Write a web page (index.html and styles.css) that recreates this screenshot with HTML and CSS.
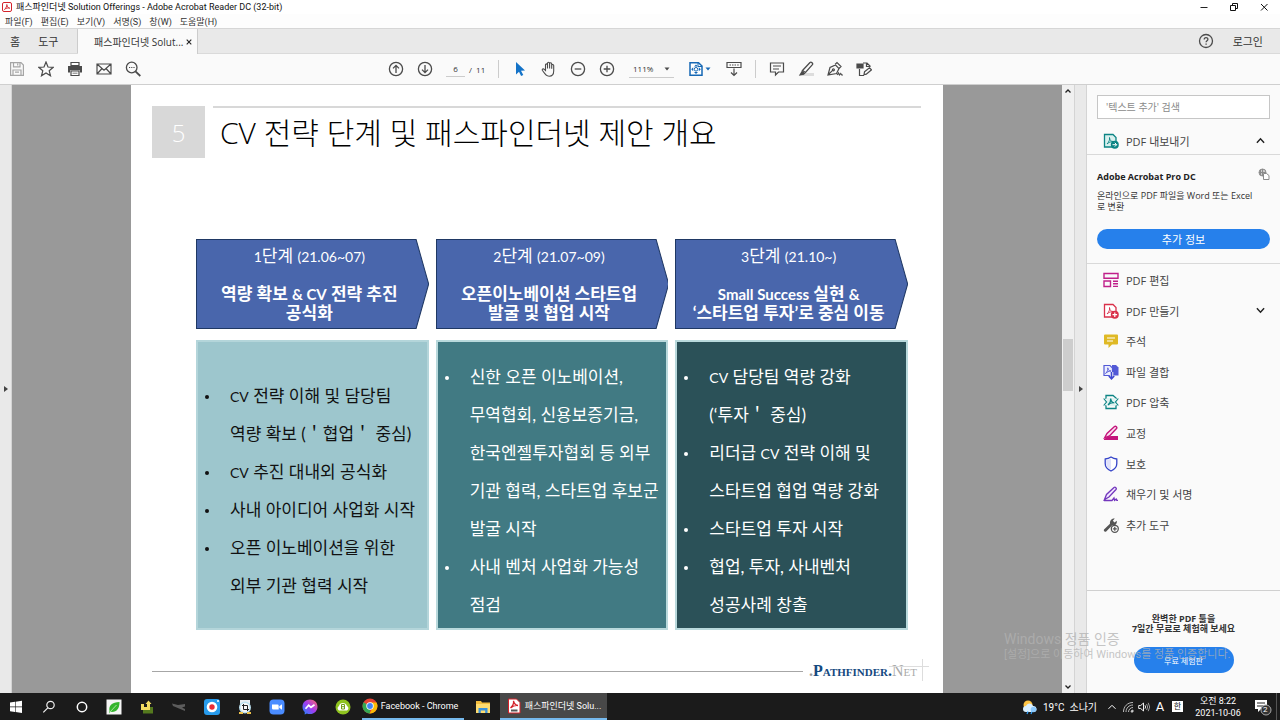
FILE: index.html
```html
<!DOCTYPE html>
<html lang="ko">
<head>
<meta charset="utf-8">
<meta name="viewport" content="width=device-width, initial-scale=1">
<title>패스파인더넷 Solution Offerings - Adobe Acrobat Reader DC (32-bit)</title>
<link rel="stylesheet" href="styles.css">
</head>
<body>
<div class="app">
  <header class="titlebar">
    <svg class="app-icon" viewBox="0 0 10 10"><rect x=".5" y=".5" width="9" height="9" rx="1.5" fill="#fff" stroke="#d3222a"/><path d="M2.5 7.5C4 6 5 4 4.800 2.500M4.800 2.500C5 5 6.500 6 7.800 6.200M2.500 7.500C4 6 6 5.600 7.800 6.200" fill="none" stroke="#d3222a" stroke-width=".9"/></svg>
    <h1 class="title">패스파인더넷 Solution Offerings - Adobe Acrobat Reader DC (32-bit)</h1>
    <div class="window-controls">
      <button aria-label="최소화"><svg viewBox="0 0 10 10"><path d="M1.500 5.500h7" stroke="#222"/></svg></button>
      <button aria-label="이전 크기로"><svg viewBox="0 0 10 10" fill="none" stroke="#111"><path d="M3.500 3.500v-2h5v5h-2M1.500 3.500h5v5h-5z"/></svg></button>
      <button aria-label="닫기"><svg viewBox="0 0 10 10"><path d="M2 2l6.500 6.500M8.500 2L2 8.500" stroke="#111"/></svg></button>
    </div>
  </header>
  <nav class="menubar">
    <button>파일(F)</button><button>편집(E)</button><button>보기(V)</button><button>서명(S)</button><button>창(W)</button><button>도움말(H)</button>
  </nav>
  <nav class="tabs">
    <div class="tabs-home"><button>홈</button><button>도구</button></div>
    <div class="tab-active"><button class="tab-name">패스파인더넷 Solut...</button><button class="tab-close" aria-label="탭 닫기"><svg viewBox="0 0 6 6"><path d="M.7.7l4.600 4.600M5.300.7L.7 5.300" stroke="#222" stroke-width="1.100"/></svg></button></div>
    <div class="tabs-right">
      <button class="help" aria-label="도움말"><svg viewBox="0 0 16 16" fill="none" stroke="#4b4b4b" stroke-width="1.300"><circle cx="8" cy="8" r="6.500"/><path d="M6.200 6.600c0-2.600 3.700-2.400 3.700-.3 0 1.400-1.800 1.500-1.800 3M8.100 10.500v1.300"/></svg></button>
      <button class="login">로그인</button>
    </div>
  </nav>

  <div class="toolbar">
    <div class="tools tools-file">
      <button aria-label="저장"><svg viewBox="0 0 16 16" fill="none" stroke="#a5a5a5" stroke-width="1.200"><path d="M1.600 1.600h10.400l2.400 2.400v10.400H1.600zM4.500 1.600v4.200h6.500V1.600M8.700 2.500v2M4 14.400V9h8v5.400M6 11.200h4"/></svg></button>
      <button aria-label="별표"><svg viewBox="0 0 16 16" fill="none" stroke="#4b4b4b" stroke-width="1.200"><path d="M8 1l2 5 5.200.3-4 3.400 1.300 5.100L8 12l-4.500 2.800 1.300-5.100-4-3.400L6 6z"/></svg></button>
      <button aria-label="인쇄"><svg viewBox="0 0 16 16"><path d="M4 1.500h8v3H4zM4 10h8v4.500H4z" fill="#fff" stroke="#4b4b4b" stroke-width="1.200"/><path d="M1 5h14v6.500h-2V9.300H3v2.200H1z" fill="#4b4b4b"/><path d="M5.500 12.200h5" stroke="#777"/></svg></button>
      <button aria-label="전자 메일"><svg viewBox="0 0 16 16" fill="none" stroke="#4b4b4b" stroke-width="1.200"><path d="M1 3h14v10H1zM1 3l7 6.200L15 3M1 13l5-5.500M15 13l-5-5.500"/></svg></button>
      <button aria-label="찾기"><svg viewBox="0 0 16 16" fill="none" stroke="#4b4b4b" stroke-width="1.300"><circle cx="6.700" cy="6.500" r="5.300"/><path d="M10.500 10.400l4.800 4.600" stroke-width="1.800"/><path d="M4 6.500h1.200M6.200 6.500h1.200M8.400 6.500h1.200" stroke-width="1.200"/></svg></button>
    </div>
    <div class="tools tools-page">
      <button aria-label="이전 페이지"><svg viewBox="0 0 16 16" fill="none" stroke="#4b4b4b" stroke-width="1.300"><circle cx="8" cy="8" r="6.600"/><path d="M8 12V4.500M5 7.400l3-3 3 3"/></svg></button>
      <button aria-label="다음 페이지"><svg viewBox="0 0 16 16" fill="none" stroke="#4b4b4b" stroke-width="1.300"><circle cx="8" cy="8" r="6.600"/><path d="M8 4v7.500M5 8.600l3 3 3-3"/></svg></button>
      <label class="page-box"><input type="text" value="6" aria-label="페이지"><span>/&nbsp; 11</span></label>
    </div>
    <div class="tools tools-view">
      <button aria-label="선택"><svg viewBox="0 0 16 16"><path d="M4 1l9 8.500-4 .3 2.300 4.200-2.200 1-2.100-4.300L4 13.500z" fill="#1473c8"/></svg></button>
      <button aria-label="손"><svg viewBox="0 0 16 16" fill="none" stroke="#4b4b4b" stroke-width="1.100"><path d="M4.500 9.500V4c0-1.500 2-1.500 2 0v3.500V2.500c0-1.600 2.100-1.600 2.100 0v5V2.800c0-1.500 2.100-1.500 2.100 0v5V4.500c0-1.400 2-1.400 2 0v5.500c0 3.500-1.700 5.200-4.500 5.200-3 0-3.700-1.500-6.700-5.700-.9-1.400.8-2.200 1.800-1.200z"/></svg></button>
      <button aria-label="축소"><svg viewBox="0 0 16 16" fill="none" stroke="#4b4b4b" stroke-width="1.300"><circle cx="8" cy="8" r="6.600"/><path d="M4.700 8h6.600"/></svg></button>
      <button aria-label="확대"><svg viewBox="0 0 16 16" fill="none" stroke="#4b4b4b" stroke-width="1.300"><circle cx="8" cy="8" r="6.600"/><path d="M4.700 8h6.600M8 4.700v6.600"/></svg></button>
    </div>
    <div class="zoom"><select aria-label="확대/축소 비율"><option>111%</option></select><svg viewBox="0 0 6 4"><path d="M.5.5h5L3 3.500z" fill="#4b4b4b"/></svg></div>
    <div class="tools tools-fit">
      <button class="fit" aria-label="페이지 맞춤"><svg viewBox="0 0 16 16"><path d="M2 1.700h8.500L14 5v9.300H2z" fill="#fff" stroke="#1668b5" stroke-width="1.500"/><path d="M10 1.700V5.500h4" fill="none" stroke="#1668b5"/><path d="M8 3.500l2 2H6zM8 13l2-2H6zM3.200 8.300l2-2v4zM12.800 8.300l-2-2v4z" fill="#1668b5"/><circle cx="8" cy="8.300" r="1.800" fill="none" stroke="#1668b5"/></svg><svg class="caret" viewBox="0 0 6 4"><path d="M.5.5h5L3 3.500z" fill="#1668b5"/></svg></button>
      <button aria-label="스크롤"><svg viewBox="0 0 16 16" fill="none" stroke="#4b4b4b" stroke-width="1.200"><path d="M1 6.500v-5h14v5zM3.500 4h1.500M6 4h1.500M8.500 4H10M11.200 4h1.500M8 7.500V14M5 11.500l3 3 3-3"/></svg></button>
    </div>
    <div class="tools tools-note">
      <button aria-label="메모"><svg viewBox="0 0 16 16" fill="none" stroke="#4b4b4b" stroke-width="1.200"><path d="M1.500 2h13v9H9.500L6.500 14v-3h-5zM4 5h8M4 8h6"/></svg></button>
      <button aria-label="강조"><svg viewBox="0 0 16 16"><path d="M7 12h9v3H4z" fill="#ddd"/><path d="M4.500 9.500l7.500-8c1.200-1 3.400 1 2.400 2.200L7.500 11.500z" fill="#fafafa" stroke="#4b4b4b" stroke-width="1.300"/><path d="M.8 14.800l3.200-5.300 3.500 3-2 1.600z" fill="#4b4b4b"/></svg></button>
      <button aria-label="서명"><svg viewBox="0 0 16 16" fill="none" stroke="#4b4b4b" stroke-width="1.200"><path d="M1 14L3 6.500 8.500 4l3.500 3.500-2.500 5zM1 14l4.800-4.800M8 3.500L10 1.500l4 4-2 2"/><circle cx="6.400" cy="8.800" r="1"/><path d="M10 14l1.500-2 1 2 1.200-1.500 1 1.500H16"/></svg></button>
      <button aria-label="양식 편집"><svg viewBox="0 0 16 16" fill="none" stroke="#4b4b4b" stroke-width="1.200"><path d="M3.500 8v6.500H8M7 2h4l3 3v1M10.500 2v3.500h3.500"/><path d="M1 3h6v4H1z" fill="#4b4b4b"/><path d="M8.500 10.800l5-4 2 2-5.200 4.400-2.300.6z"/></svg></button>
    </div>
  </div>

  <div class="workspace">
    <button class="rail" aria-label="탐색 창 열기"><svg viewBox="0 0 4 6"><path d="M0 0l4 3-4 3z" fill="#444"/></svg></button>
    <main class="viewport">
      <article class="page">
        <div class="slide-head">
          <div class="slide-no">5</div>
          <h2 class="slide-title">CV 전략 단계 및 패스파인더넷 제안 개요</h2>
        </div>
        <div class="stages">
          <section class="stage">
            <header class="arrow"><svg viewBox="0 0 232 90" preserveAspectRatio="none"><path d="M.5.5h219L232 45l-12.500 44.500H.5z"/></svg>
              <p><span class="en">1</span>단계 <span class="en">(21.06~07)</span></p><h3>역량 확보 <span class="en">&amp; CV</span> 전략 추진<br>공식화</h3></header>
            <ul class="card card-light">
              <li><div><span class="en">CV</span> 전략 이해 및 담당팀<br>역량 확보 (＇협업＇ 중심)</div></li>
              <li><div><span class="en">CV</span> 추진 대내외 공식화</div></li>
              <li><div>사내 아이디어 사업화 시작</div></li>
              <li><div>오픈 이노베이션을 위한<br>외부 기관 협력 시작</div></li>
            </ul>
          </section>
          <section class="stage">
            <header class="arrow"><svg viewBox="0 0 232 90" preserveAspectRatio="none"><path d="M.5.5h219L232 45l-12.500 44.500H.5z"/></svg>
              <p><span class="en">2</span>단계 <span class="en">(21.07~09)</span></p><h3>오픈이노베이션 스타트업<br>발굴 및 협업 시작</h3></header>
            <ul class="card card-teal">
              <li><div>신한 오픈 이노베이션,<br>무역협회, 신용보증기금,<br>한국엔젤투자협회 등 외부<br>기관 협력, 스타트업 후보군<br>발굴 시작</div></li>
              <li><div>사내 벤처 사업화 가능성<br>점검</div></li>
            </ul>
          </section>
          <section class="stage">
            <header class="arrow"><svg viewBox="0 0 232 90" preserveAspectRatio="none"><path d="M.5.5h219L232 45l-12.500 44.500H.5z"/></svg>
              <p><span class="en">3</span>단계 <span class="en">(21.10~)</span></p><h3><span class="en">Small Success</span> 실현 <span class="en">&amp;</span><br>‘스타트업 투자’로 중심 이동</h3></header>
            <ul class="card card-dark">
              <li><div><span class="en">CV</span> 담당팀 역량 강화<br>(‘투자＇ 중심)</div></li>
              <li><div>리더급 <span class="en">CV</span> 전략 이해 및<br>스타트업 협업 역량 강화</div></li>
              <li><div>스타트업 투자 시작</div></li>
              <li><div>협업, 투자, 사내벤처<br>성공사례 창출</div></li>
            </ul>
          </section>
        </div>
        <footer class="slide-foot">
          <span class="foot-line"></span>
          <span class="brand"><span class="brand-dot">.</span>Pathfinder.<span class="brand-net">Net</span></span>
        </footer>
      </article>
    </main>
    <div class="scrollbar">
      <svg viewBox="0 0 8 6"><path d="M1.500 4.500L4 2l2.500 2.500" fill="none" stroke="#222" stroke-width="1.300"/></svg>
      <div class="track"><div class="thumb"></div></div>
      <svg viewBox="0 0 8 6"><path d="M1.500 1.500L4 4l2.500-2.500" fill="none" stroke="#222" stroke-width="1.300"/></svg>
    </div>
    <button class="rail rail-right" aria-label="도구 창 닫기"><svg viewBox="0 0 4 6"><path d="M0 0l4 3-4 3z" fill="#444"/></svg></button>
    <aside class="panel">
      <div class="panel-search"><input type="text" placeholder="'텍스트 추가' 검색" aria-label="도구 검색"></div>
      <button class="tool tool-open"><svg viewBox="0 0 16 16"><path d="M1.500 1.500h8.500l3 3v9.500H1.500z" fill="#d9f0ee" stroke="#0c8484" stroke-width="1.300"/><path d="M4 11c2-2 3-4.500 2.500-6.500C6.500 7 8 8.500 10 8.500 8 8.500 5.500 9.500 4 11" fill="none" stroke="#0c8484" stroke-width=".9"/><circle cx="11.800" cy="11.700" r="4" fill="#0c8484"/><path d="M9.500 11.700h4M11.800 9.800l1.900 1.900-1.900 1.900" stroke="#fff" fill="none"/></svg><span>PDF 내보내기</span><svg class="chev" viewBox="0 0 8 6"><path d="M.8 5L4 1.500 7.200 5" fill="none" stroke="#222" stroke-width="1.300"/></svg></button>
      <div class="promo">
        <div class="promo-head"><h3>Adobe Acrobat Pro DC</h3><svg viewBox="0 0 12 12" fill="none" stroke="#8b8b8b"><circle cx="4.500" cy="4.500" r="3.500" fill="#ccc"/><path d="M1 4.500h7M4.500 1v7M2.500 2v5"/><path d="M5.500 5.500h3l2.500 2v4H5.500z" fill="#fff"/></svg></div>
        <p>온라인으로 PDF 파일을 Word 또는 Excel<br>로 변환</p>
        <button class="pill">추가 정보</button>
      </div>
      <div class="tool-list">
        <button class="tool"><svg viewBox="0 0 16 16" fill="none" stroke="#c0208a" stroke-width="1.400"><path d="M1 1.500h14v4.800H1zM1 9h6.500v5.500H1zM10 9.200h5M10 11.800h5M10 14.400h5"/></svg><span>PDF 편집</span></button>
        <button class="tool"><svg viewBox="0 0 16 16"><path d="M1.500 1.500h8.500l3 3v9.500H1.500z" fill="#fff" stroke="#d9304a" stroke-width="1.300"/><path d="M4 11c2-2 3-4.500 2.500-6.500C6.500 7 8 8.500 10 8.500 8 8.500 5.500 9.500 4 11" fill="none" stroke="#d9304a" stroke-width=".9"/><circle cx="11.800" cy="11.700" r="4" fill="#d9304a"/><path d="M9.500 11.700h4.600M11.800 9.400V14" stroke="#fff" stroke-width="1.200"/></svg><span>PDF 만들기</span><svg class="chev" viewBox="0 0 8 6"><path d="M.8 1L4 4.500 7.200 1" fill="none" stroke="#222" stroke-width="1.300"/></svg></button>
        <button class="tool"><svg viewBox="0 0 16 16"><path d="M2 1.500h12q1 0 1 1v8q0 1-1 1H9L5.500 15v-3.500H2q-1 0-1-1v-8q0-1 1-1z" fill="#dfb925"/><path d="M4 5h8M4 8h6" stroke="#fff" stroke-width="1.200"/></svg><span>주석</span></button>
        <button class="tool"><svg viewBox="0 0 16 16"><path d="M9 1h4l2.500 2.500v8H9z" fill="#5259d6"/><path d="M1 1.500h6l2.500 2.500v7.500H1z" fill="#eceeff" stroke="#5259d6" stroke-width="1.200"/><path d="M2.500 9.500C4.500 7.500 5 6 4.800 3.800 5 6 6 7 8 7 6 7 4 8 2.500 9.500" fill="none" stroke="#5259d6" stroke-width=".9"/><path d="M8.500 8v5" stroke="#fafafa" stroke-width="3.500"/><path d="M8.500 8v6.500M5.800 12l2.700 2.800 2.700-2.800" fill="none" stroke="#3e47d0" stroke-width="1.600"/></svg><span>파일 결합</span></button>
        <button class="tool"><svg viewBox="0 0 16 16"><path d="M3 5V1.500h7L13 4v1M3 11v3.500h10V11" fill="none" stroke="#0c8484" stroke-width="1.300"/><path d="M3.500 4h9v8h-9z" fill="#e0f3f1"/><path d="M.7 4.500L3.500 8 .7 11.500M15.300 4.500L12.500 8l2.800 3.500M5 11c2-2 3-4 2.700-6.500C8 7 9 8.500 11.300 8.800 9 8.500 6.500 9.500 5 11" fill="none" stroke="#0c8484" stroke-width="1.200"/></svg><span>PDF 압축</span></button>
        <button class="tool"><svg viewBox="0 0 16 16"><path d="M1.500 13L4 8.500l7.500-7c1.200-1 3 .8 2 2L6.500 11z" fill="#fce2f2" stroke="#c4157c" stroke-width="1.400"/><path d="M1 14l4-2.600L8 11h7v4H1z" fill="#c4157c"/></svg><span>교정</span></button>
        <button class="tool"><svg viewBox="0 0 16 16"><path d="M8 1c2 1.400 3.600 1.900 5.800 2v4.500c0 3.500-2.500 6-5.800 7.500-3.300-1.500-5.800-4-5.800-7.500V3C4.400 2.900 6 2.400 8 1z" fill="#fff" stroke="#3544c8" stroke-width="1.300"/><path d="M8 2.500C6.500 3.500 5 3.900 3.200 4v3.500c0 3 2 4.900 4.800 6.200z" fill="#dfe1fa"/></svg><span>보호</span></button>
        <button class="tool"><svg viewBox="0 0 16 16" fill="none" stroke="#7337bd" stroke-width="1.300"><path d="M1.500 13.500L3.500 8.500l7.500-7c1.200-1 3 .8 2 2l-7 7.500zM1 14.500h8l2-2.500.6 2.300 1.600-1.300.6 1.300H15" fill="#f1e6ff"/></svg><span>채우기 및 서명</span></button>
        <button class="tool"><svg viewBox="0 0 16 16"><path d="M1 12.500L7 6.800C6.500 4 8.500 1 11.800 1.500L9.800 3.800l1.700 1.700 2.300-1.800c.4 2-.6 4-2.300 4.600L9 8.500 3.200 14.400C1.800 15.300.2 13.700 1 12.500z" fill="#555"/><circle cx="11.800" cy="11.800" r="3.500" fill="#fff" stroke="#555" stroke-width="1.300"/><path d="M9.800 11.800h4M11.800 9.800v4" stroke="#555" stroke-width="1.300"/></svg><span>추가 도구</span></button>
      </div>
      <div class="trial"><p>완벽한 PDF 툴을<br>7일간 무료로 체험해 보세요</p><button class="pill">무료 체험판</button></div>
    </aside>
    <div class="watermark"><strong>Windows 정품 인증</strong><span>[설정]으로 이동하여 Windows를 정품 인증합니다.</span></div>
  </div>

  <footer class="taskbar">
    <div class="pins">
      <button aria-label="시작"><svg viewBox="0 0 16 16" fill="#fff"><path d="M2 3.500l5-.7V7.600H2zM7.600 2.700L14 1.800v5.800H7.600zM2 8.200h5V13l-5-.7zM7.600 8.200H14V14l-6.400-.9z"/></svg></button>
      <button aria-label="검색"><svg viewBox="0 0 16 16" fill="none" stroke="#eee" stroke-width="1.200"><circle cx="9.500" cy="6" r="3.700"/><path d="M6.800 8.800L2.300 13.300"/></svg></button>
      <button aria-label="Cortana"><svg viewBox="0 0 16 16"><circle cx="8" cy="8" r="4.700" fill="none" stroke="#fff" stroke-width="1.500"/></svg></button>
      <button aria-label="나뭇잎"><svg viewBox="0 0 16 16"><path d="M.5.500h15v15H.5z" fill="#f5f5f5"/><path d="M3.500 12C2.500 6 6 3.500 13.500 3c0 7-3 10.500-9 9.800L3 14.500" fill="#35b52d"/><path d="M3.500 13.500L10.500 6" stroke="#a8e5a0"/></svg></button>
      <button aria-label="작업 도구"><svg viewBox="0 0 16 16"><path d="M7 8h7v6.500H4V10h3z" fill="#55791e"/><path d="M2 5h3v3h3V5H6.500L9.500 1.500 12.500 5H11v6H2z" fill="#f3dc62"/></svg></button>
      <button aria-label="기기"><svg viewBox="0 0 16 16"><path d="M1 4.500l6 1.500 7-1v2.500L11 8.500l3 1.500v2L8 9.500 2 7z" fill="#5c5c5c"/></svg></button>
      <button aria-label="녹화"><svg viewBox="0 0 16 16"><rect width="16" height="16" rx="3" fill="#279bec"/><circle cx="8" cy="8" r="5.300" fill="#fff"/><circle cx="8" cy="8" r="2.700" fill="#e92c36"/><circle cx="14" cy="2" r="1" fill="#fff"/></svg></button>
      <button aria-label="캡처"><svg viewBox="0 0 16 16"><path d="M3 1h10v4H3z" fill="#e9edf0"/><circle cx="8" cy="8.500" r="6" fill="#bce1ef"/><circle cx="8" cy="8.500" r="4.500" fill="#f8f8f8"/><path d="M5 6.500h5.500V12M6.500 5v5.500H12" fill="none" stroke="#222"/><path d="M2 13h4v2H2zM10 13h4v2h-4z" fill="#efc24b"/></svg></button>
      <button aria-label="Zoom"><svg viewBox="0 0 16 16"><rect x=".5" y=".5" width="15" height="15" rx="4" fill="#4a8cff"/><path d="M3 5.500h5.500q1.200 0 1.200 1.200v3.800H4.200Q3 10.500 3 9.300zM10.300 7.200L13 5.300v5.400l-2.700-1.900z" fill="#fff"/></svg></button>
      <button aria-label="Messenger"><svg viewBox="0 0 16 16"><defs><linearGradient id="msg" x1="0" y1="1" x2="1" y2="0"><stop offset="0" stop-color="#168cff"/><stop offset=".5" stop-color="#a13bf0"/><stop offset="1" stop-color="#ff6b67"/></linearGradient></defs><path d="M8 .5c4.400 0 7.500 3.100 7.500 7.200S12.400 15 8 15c-1.500 0-2.500-.4-3-.6L2.700 15.500V13C1.300 11.800.5 10 .5 7.700.5 3.600 3.600.5 8 .5z" fill="url(#msg)"/><path d="M3.500 9.800L6.700 6.300l2.300 2 3.500-2.500" fill="none" stroke="#fff" stroke-width="1.700"/></svg></button>
      <button aria-label="클라우드"><svg viewBox="0 0 16 16"><circle cx="8" cy="8" r="7.500" fill="#8fc31f"/><path d="M4 11.500a2.500 2.500 0 010-4.500c.5-4 7-4 8 0a2.500 2.500 0 010 4.500z" fill="#fff"/><path d="M6.500 5.500h3v4.500h-3zM6.500 7.700h3" stroke="#729f16" fill="none"/></svg></button>
    </div>
    <button class="task task-chrome"><svg viewBox="0 0 16 16"><circle cx="8" cy="8" r="7.500" fill="#e94335"/><path d="M8 8L1.500 4.300A7.500 7.500 0 008 15.500z" fill="#35a853"/><path d="M8 4.500h6.500A7.500 7.500 0 0115.500 8 7.500 7.500 0 017.500 15.500L11 9.500z" fill="#fbbc04"/><circle cx="8" cy="8" r="3.700" fill="#fff"/><circle cx="8" cy="8" r="2.900" fill="#4285f4"/></svg>Facebook - Chrome</button>
    <button class="folder" aria-label="파일 탐색기"><svg viewBox="0 0 16 16"><path d="M1 2h5l1 1.500h8V14H1z" fill="#f4bd3d"/><path d="M1 5h14v9H1z" fill="#ffdc70"/><path d="M3.500 14V9h9v5h-2.300v-2.500H5.800V14z" fill="#3b92db"/></svg></button>
    <button class="task task-active"><svg viewBox="0 0 16 16"><path d="M2.500 1h8L14 4.500V15H2.500z" fill="#fff" stroke="#d3222a"/><path d="M4.500 10C7 7.500 8 5 7.500 2.800 8 5.500 9.500 7 12 7.500 9 7 7 8 4.500 10" fill="none" stroke="#d3222a" stroke-width="1.300"/><path d="M5 12.500h6.500" stroke="#555" stroke-width="2"/></svg>패스파인더넷 Solu...</button>
    <div class="tray">
      <button class="weather"><svg viewBox="0 0 16 16"><circle cx="6" cy="6" r="4.500" fill="#ffc545"/><path d="M4 13a3 3 0 010-6c1-3.500 6-3.500 7 0a3 3 0 011 6z" fill="#d9efff"/><path d="M6 12.500l-1 2.500M10 12.500L9 15" stroke="#2c9af1" stroke-width="1.300"/><circle cx="11.500" cy="10.500" r="2.800" fill="#8cc9fb"/></svg>19°C&nbsp; 소나기</button>
      <button aria-label="숨겨진 아이콘"><svg class="up" viewBox="0 0 8 6"><path d="M.5 4.800L4 1.300l3.500 3.500" fill="none" stroke="#fff"/></svg></button>
      <button aria-label="네트워크"><svg viewBox="0 0 12 12" fill="none" stroke="#bbb"><path d="M1.500 11C1.500 5.500 5.500 1.500 11 1.500M4 11c0-4 3-7 7-7M6.500 11c0-2.500 2-4.500 4.500-4.500"/><path d="M9 11a2 2 0 012-2v2z" fill="#fff"/></svg></button>
      <button aria-label="볼륨"><svg viewBox="0 0 12 12" fill="none" stroke="#eee"><path d="M.7 4.500h2L5.500 2v8L2.700 7.500h-2zM7 4.300q1.200 1.700 0 3.400"/><path d="M8.600 3q2.200 3 0 6M10.200 1.800q3 4.200 0 8.400" stroke="#999"/></svg></button>
      <button class="lang">A</button>
      <button class="ime">한</button>
      <button class="clock">오전 8:22<br>2021-10-06</button>
      <button class="notify" aria-label="알림 2개"><svg viewBox="0 0 18 18"><path d="M1 2h12v9H7l-3 3v-3H1z" fill="#fff"/><path d="M3 5h8M3 8h6" stroke="#222"/><circle cx="12" cy="12" r="5" fill="#333" stroke="#aaa"/></svg><span>2</span></button>
    </div>
  </footer>
</div>
</body>
</html>
```
FILE: styles.css
```css
* { box-sizing: border-box; }
body { margin: 0; font-family: "Open Sans", "Noto Sans CJK KR", sans-serif; font-size: 9px; color: #333; }
button, input, select { font: inherit; color: inherit; background: none; border: 0; padding: 0; margin: 0; }
button { display: flex; align-items: center; justify-content: center; white-space: nowrap; }
h1, h2, h3, p, ul { margin: 0; padding: 0; font-weight: 400; }
svg { display: block; flex: none; }

.app { min-height: 100vh; display: flex; flex-direction: column; background: #fafafa; }

.titlebar { display: flex; align-items: center; height: 14px; padding: 0 4px 0 2px; gap: 4px; background: #fff; }
.titlebar, .menubar, .taskbar, .watermark { font-family: Roboto, "Noto Sans CJK KR", sans-serif; }
.app-icon { width: 10px; height: 10px; }
.title { font-size: 9px; line-height: 14px; color: #111; flex: 1; }
.window-controls { display: flex; gap: 20px; padding-right: 7px; }
.window-controls svg { width: 10px; height: 10px; }

.menubar { display: flex; height: 14px; padding-left: 5px; gap: 8px; font-size: 9px; background: #fdfdfd; }

.tabs { display: flex; height: 26px; background: #e9e9e9; border-top: 1px solid #d6d6d6; border-bottom: 1px solid #dadada; font-size: 10px; }
.tabs-home { display: flex; width: 78px; padding-left: 10px; gap: 18px; border-right: 1px solid #ccc; font-size: 11px; }
.tab-active { display: flex; align-items: center; justify-content: space-between; width: 120px; margin-bottom: -1px; padding: 0 5px 0 16px; background: #fafafa; border-right: 1px solid #ccc; }
.tab-close svg { width: 6px; height: 6px; }
.tabs-right { display: flex; margin-left: auto; gap: 19px; padding-right: 17px; font-size: 11px; }
.help svg { width: 16px; height: 16px; }

.toolbar { display: flex; align-items: center; height: 31px; padding-left: 9px; border-bottom: 1px solid #cfcfcf; background: #fafafa; }
.tools { display: flex; align-items: center; }
.tools svg { width: 16px; height: 16px; }
.tools-file { gap: 13px; width: 379px; }
.tools-page { gap: 13px; width: 111px; height: 18px; border-right: 1px solid #ccc; }
.page-box { display: flex; align-items: center; gap: 4px; font-size: 8px; }
.page-box input { width: 19px; height: 16px; text-align: center; border-bottom: 1px solid #ccc; }
.tools-view { gap: 13px; padding-left: 13px; width: 130px; }
.zoom { display: flex; align-items: center; justify-content: space-between; width: 45px; height: 17px; padding: 0 4px; border-bottom: 1px solid #ccc; font-size: 8px; }
.zoom select { appearance: none; width: 26px; }
.zoom svg, .tools .caret { width: 6px; height: 4px; }
.tools-fit { gap: 15px; width: 82px; height: 18px; padding-left: 14px; border-right: 1px solid #ccc; }
.fit { gap: 1px; }
.tools-note { gap: 13px; padding-left: 13px; }

.workspace { flex: 1; display: flex; position: relative; }
.rail { width: 12px; background: #e9e9e9; border-right: 1px solid #d4d4d4; }
.rail svg { width: 4px; height: 6px; }
.viewport { flex: 1; display: flex; justify-content: center; background: #999; }
.scrollbar { width: 13px; display: flex; flex-direction: column; align-items: center; padding: 3px 0; background: #f0f0f0; border-right: 1px solid #d4d4d4; }
.scrollbar svg { width: 8px; height: 6px; }
.track { flex: 1; align-self: stretch; padding: 245px 1px 0; }
.thumb { height: 52px; background: #cdcdcd; }

.page { width: 100%; max-width: 812px; padding: 21px 22px 14px 21px; background: #fff; color: #000; font-family: Lato, "Noto Sans CJK KR", sans-serif; display: flex; flex-direction: column; }
.slide-head { display: flex; gap: 8px; font-family: "Open Sans", "Noto Sans CJK KR", sans-serif; font-weight: 300; }
.slide-no { width: 53px; height: 52px; line-height: 54px; text-align: center; font-size: 24px; color: #fff; background: #d8d8d8; }
.slide-title { flex: 1; padding-left: 7px; border-top: 2px solid #d8d8d8; font-size: 30px; line-height: 50px; font-weight: 300; white-space: nowrap; }
.stages { display: grid; grid-template-columns: repeat(3, 1fr); gap: 7px; margin: 81px 13px 0 44px; }
.stage { display: flex; flex-direction: column; gap: 11px; }
.arrow { position: relative; height: 90px; padding: 7px 6px 0 0; text-align: center; font-size: 17px; line-height: 19px; color: #fff; white-space: nowrap; }
.arrow svg { position: absolute; inset: 0; width: 100%; height: 100%; fill: #4966ac; stroke: #1f3864; }
.arrow p { position: relative; margin-bottom: 19px; }
.arrow h3 { position: relative; font-size: 17px; font-weight: 700; }
.en { font-size: 14px; line-height: 1; }
.arrow h3 .en { font-size: 15px; }
.card { display: flex; flex-direction: column; justify-content: center; height: 290px; padding: 12px 0 0 7px; list-style: none; font-size: 17px; line-height: 38px; color: #fff; border: 2px solid #b9d9dc; white-space: nowrap; }
.card li { display: grid; grid-template-columns: 25px 1fr; }
.card li::before { content: ""; width: 4px; height: 4px; margin-top: 18px; border-radius: 2px; background: currentColor; }
.card-light { background: #9dc6cd; color: #111; border-color: #b4d5da; }
.card-teal { background: #417a83; }
.card-dark { background: #2b5158; }
.slide-foot { display: flex; align-items: center; gap: 6px; margin-top: auto; }
.foot-line { flex: 1; height: 1px; background: #a6a6a6; }
.brand { position: relative; padding-right: 4px; font: 700 16px/16px "Liberation Serif", serif; font-variant: small-caps; color: #14497f; }
.brand::before, .brand::after { content: ""; position: absolute; background: #ddd; }
.brand::before { right: -2px; top: -4px; width: 1px; height: 22px; }
.brand::after { right: -8px; top: 3px; width: 40px; height: 1px; }
.brand-dot { color: #999; }
.brand-net { font-weight: 400; color: #aaa; }

.panel { display: flex; flex-direction: column; width: 193px; background: #fafafa; }
.panel-search { padding: 10px 10px 0; }
.panel-search input { width: 100%; height: 24px; padding-left: 8px; border: 1px solid #c6c6c6; background: #fff; font-size: 10px; }
.panel-search input::placeholder { color: #8a8a8a; opacity: 1; }
.tool { width: 100%; justify-content: flex-start; gap: 7px; padding: 0 15px 0 16px; font-size: 11px; color: #444; }
.tool svg { width: 16px; height: 16px; }
.tool .chev { width: 9px; height: 7px; margin-left: auto; }
.tool-open { height: 36px; padding-top: 8px; border-bottom: 1px solid #d9d9d9; }
.promo { height: 109px; padding: 13px 10px 0; border-bottom: 1px solid #d9d9d9; }
.promo-head { display: flex; justify-content: space-between; }
.promo-head svg { width: 12px; height: 12px; }
.promo h3 { font-size: 9px; line-height: 17px; font-weight: 700; color: #222; }
.promo p { margin: 5px 0 17px; font-size: 9px; line-height: 11px; white-space: nowrap; }
.pill { width: 100%; height: 20px; border-radius: 20px; background: #2680eb; color: #fff; font-size: 11px; }
.tool-list { flex: 1; display: grid; grid-auto-rows: 1fr; padding: 1px 0 50px; }
.trial { display: flex; flex-direction: column; align-items: center; gap: 13px; height: 103px; padding-top: 23px; border-top: 1px solid #d0d0d0; text-align: center; }
.trial p { font-size: 9px; line-height: 10px; font-weight: 700; }
.trial .pill { width: 100px; height: 26px; font-size: 8px; }
.watermark { position: absolute; right: 52px; bottom: 31px; width: 224px; display: flex; flex-direction: column; color: rgba(178, 178, 178, .75); white-space: nowrap; pointer-events: none; }
.watermark strong { font-size: 14px; line-height: 17px; font-weight: 400; }
.watermark span { font-size: 11px; line-height: 14px; }

.taskbar { display: flex; height: 27px; background: #1b1b1b; color: #fff; font-size: 9px; }
.pins { display: grid; grid-auto-flow: column; grid-auto-columns: 1fr; width: 359px; margin-right: 3px; }
.taskbar svg { width: 16px; height: 16px; }
.task { gap: 3px; width: 102px; padding-right: 6px; border-bottom: 2px solid #76b9ed; }
.folder { width: 36px; padding-left: 2px; }
.task-active { width: 107px; background: #484848; padding: 0; }
.tray { display: flex; margin-left: auto; padding-right: 3px; }
.tray svg { width: 12px; height: 12px; }
.tray button { width: 16px; }
.tray .weather { width: 82px; gap: 5px; justify-content: flex-start; font-size: 10px; }
.tray .weather svg { width: 16px; height: 16px; }
.tray .up { width: 8px; height: 6px; }
.tray .lang { font-size: 13px; }
.tray .ime { width: 11px; height: 11px; margin: 8px 4px 0 4px; background: #fff; color: #111; font-size: 8px; line-height: 11px; }
.tray .clock { width: 62px; font-size: 9px; line-height: 12px; text-align: center; }
.tray .notify { position: relative; width: 28px; border-right: 1px solid #555; }
.tray .notify svg { width: 18px; height: 18px; }
.notify span { position: absolute; left: 14px; top: 12px; font-size: 8px; line-height: 10px; }
```
